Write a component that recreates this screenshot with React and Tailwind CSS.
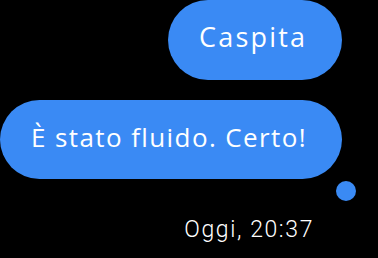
export default function App() {
  return (
    <div className="w-[378px] h-[258px] bg-black overflow-hidden flex flex-col items-end pr-[36px]">
      <div className="w-[174px] h-[80px] rounded-full bg-[#3a8af4] flex items-center justify-start pb-[5px] pl-[31px] text-white text-[27px] tracking-[2.2px] font-['Open_Sans',sans-serif]">
        Caspita
      </div>

      <div className="relative mt-[20px] w-[342px] h-[79px] rounded-full bg-[#3a8af4] flex items-center pl-[31px] pb-[4px] text-white text-[26px] tracking-[1.4px] font-['Open_Sans',sans-serif] whitespace-nowrap">
        È stato fluido. Certo!
        <div className="absolute right-[-14px] bottom-[-22px] w-[20px] h-[20px] rounded-full bg-[#3a8af4]" />
      </div>

      <div className="mt-[39px] mr-[28px] text-white text-[23px] font-light font-['Roboto',sans-serif] tracking-[1.6px] leading-none">
        Oggi, 20:37
      </div>
    </div>
  )
}
